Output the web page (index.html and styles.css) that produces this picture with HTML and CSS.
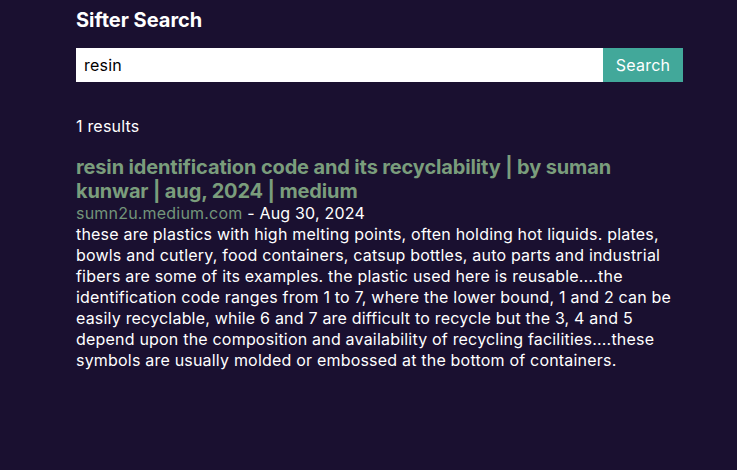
FILE: index.html
```html
<!DOCTYPE html>
<html>
<head>
<meta charset="utf-8">
<link rel="stylesheet" href="styles.css">
</head>
<body>
<div class="page">
  <h1 class="title">Sifter Search</h1>
  <form class="search">
    <input class="search-input" type="text" value="resin">
    <button class="search-btn" type="button">Search</button>
  </form>
  <p class="count">1 results</p>
  <div class="result">
    <a class="result-title">resin identification code and its recyclability | by suman kunwar | aug, 2024 | medium</a>
    <div class="meta"><span class="domain">sumn2u.medium.com</span> - Aug 30, 2024</div>
    <p class="snippet">these are plastics with high melting points, often holding hot liquids. plates, bowls and cutlery, food containers, catsup bottles, auto parts and industrial fibers are some of its examples. the plastic used here is reusable....the identification code ranges from 1 to 7, where the lower bound, 1 and 2 can be easily recyclable, while 6 and 7 are difficult to recycle but the 3, 4 and 5 depend upon the composition and availability of recycling facilities....these symbols are usually molded or embossed at the bottom of containers.</p>
  </div>
</div>
</body>
</html>
```
FILE: styles.css
```css
html, body {
  margin: 0;
  padding: 0;
  background: #1a1030;
  height: 100%;
}
body {
  font-family: Inter, "Noto Sans", sans-serif;
  color: #ffffff;
  letter-spacing: 0.2px;
}
.page {
  width: 607px;
  margin-left: 76px;
  padding-top: 6px;
}
.title {
  font-size: 20px;
  line-height: 28px;
  font-weight: 700;
  letter-spacing: 0;
  margin: 0 0 14px;
}
.search {
  display: flex;
  height: 34px;
  margin: 0;
}
.search-input {
  flex: 1;
  border: none;
  outline: none;
  background: #ffffff;
  font-family: Inter, sans-serif;
  font-size: 16px;
  letter-spacing: 0.2px;
  color: #000;
  padding: 0 8px;
  margin: 0;
  caret-color: #000;
}
.search-btn {
  width: 80px;
  border: none;
  background: #42a89a;
  color: #ffffff;
  font-family: Inter, sans-serif;
  font-size: 16px;
  letter-spacing: 0.2px;
  margin: 0;
  padding: 0;
}
.count {
  font-size: 16px;
  line-height: 24px;
  margin: 32px 0 17px;
}
.result-title {
  display: block;
  font-size: 20px;
  line-height: 24px;
  font-weight: 700;
  letter-spacing: -0.14px;
  color: #7a9d7c;
}
.meta {
  font-size: 16px;
  line-height: 21px;
}
.domain {
  color: #73957a;
}
.snippet {
  font-size: 16px;
  line-height: 21px;
  margin: 0;
}
```
